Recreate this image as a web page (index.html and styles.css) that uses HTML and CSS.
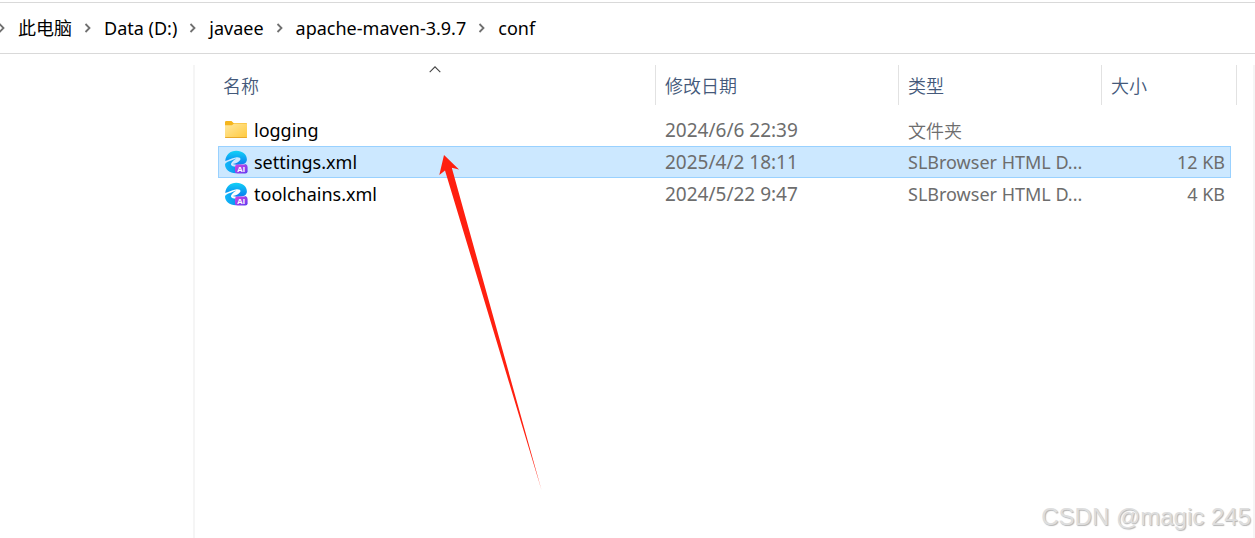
FILE: index.html
```
<!DOCTYPE html>
<html lang="zh-CN">
<head>
  <meta charset="UTF-8">
  <meta name="viewport" content="width=device-width, initial-scale=1.0">
  <title>conf</title>
  <link rel="stylesheet" href="styles.css">
</head>
<body>

  <!-- Shared icons -->
  <svg class="symbols" aria-hidden="true">
    <defs>
      <linearGradient id="blue" x1="0" y1="0" x2="0" y2="1">
        <stop offset="0" stop-color="#12d2f6"/>
        <stop offset="1" stop-color="#0a7cf0"/>
      </linearGradient>
      <linearGradient id="cyan" x1="0" y1="0" x2="1" y2="0">
        <stop offset="0" stop-color="#10b8f8"/>
        <stop offset="1" stop-color="#0878e8"/>
      </linearGradient>
      <linearGradient id="purple" x1="0" y1="0" x2="1" y2="1">
        <stop offset="0" stop-color="#d545e4"/>
        <stop offset="1" stop-color="#5a3df2"/>
      </linearGradient>
      <linearGradient id="yellow" x1="0" y1="0" x2="1" y2="1">
        <stop offset="0" stop-color="#ffe8a0"/>
        <stop offset="1" stop-color="#ffc93c"/>
      </linearGradient>
    </defs>
    <symbol id="chevron" viewBox="0 0 8 10">
      <path d="M1.5 1 L5.5 5 L1.5 9" fill="none" stroke="#707070" stroke-width="1.8"/>
    </symbol>
    <symbol id="browser" viewBox="0 0 24 24">
      <path d="M1.2 11 C1.8 4.8 6.3 .8 12.2 .8 C18.5 .8 23 4.6 22.9 9.6 C22.8 12.8 20.4 14.4 16.6 14.6 C13.6 14.8 10.6 14.6 8.6 14 C12 13.4 15.6 11.6 16.4 9.4 C16.9 7.6 14.6 6.9 11.6 7.4 C7.4 8 4.4 10.4 1.2 11 Z" fill="url(#blue)"/>
      <path d="M1 14.8 C1.2 12.4 6 11 12.4 8.6 C9 10.8 6.6 12.8 7 14.8 C8 17.4 15 17.6 22.4 14 C20.4 20 16.5 23.2 11.6 23.2 C5.6 23.2 1.2 19.4 1 14.8 Z" fill="url(#cyan)"/>
      <rect x="11" y="14.6" width="12.6" height="9" rx="2.4" fill="url(#purple)"/>
    </symbol>
  </svg>

  <!-- Address bar -->
  <nav class="breadcrumb" aria-label="路径">
    <svg class="chevron"><use href="#chevron"/></svg>
    <a href="#">此电脑</a>
    <svg class="chevron"><use href="#chevron"/></svg>
    <a href="#">Data (D:)</a>
    <svg class="chevron"><use href="#chevron"/></svg>
    <a href="#">javaee</a>
    <svg class="chevron"><use href="#chevron"/></svg>
    <a href="#">apache-maven-3.9.7</a>
    <svg class="chevron"><use href="#chevron"/></svg>
    <a href="#">conf</a>
  </nav>

  <div class="explorer">
    <aside class="sidebar"></aside>

    <!-- File list -->
    <main class="files">
      <table class="file-table">
        <colgroup>
          <col>
          <col class="col-date">
          <col class="col-type">
          <col class="col-size">
          <col class="col-end">
        </colgroup>
        <thead>
          <tr>
            <th aria-sort="ascending">
              <svg class="sort" viewBox="0 0 12 7"><path d="M.7 6.2 L6 .9 L11.3 6.2" fill="none" stroke="#444" stroke-width="1.1"/></svg>
              <button type="button">名称</button>
            </th>
            <th><button type="button">修改日期</button></th>
            <th><button type="button">类型</button></th>
            <th class="last"><button type="button">大小</button></th>
            <td class="end"></td>
          </tr>
        </thead>
        <tbody>
          <tr>
            <td class="name">
              <div class="file">
                <svg class="icon" viewBox="0 0 24 24">
                  <path d="M1 4.2 Q1 3 2.2 3 H7.5 L9.5 5 H22 Q23 5 23 6 V9 H1 Z" fill="#f5b51c"/>
                  <path d="M1 7.3 H8 L10 5.6 H22.2 Q23 5.6 23 6.4 V19.2 Q23 20 22.2 20 H1.8 Q1 20 1 19.2 Z" fill="url(#yellow)"/>
                  <path d="M1 19 H23 Q23 20 22.2 20 H1.8 Q1 20 1 19 Z" fill="#e8a92c"/>
                </svg>
                <span>logging</span>
              </div>
            </td>
            <td class="date">2024/6/6 22:39</td>
            <td class="cjk">文件夹</td>
            <td class="size"></td>
            <td class="end"></td>
          </tr>
          <tr class="selected">
            <td class="name">
              <div class="file">
                <svg class="icon" viewBox="0 0 24 24">
                  <use href="#browser"/>
                  <text class="badge" x="17" y="22" text-anchor="middle">AI</text>
                </svg>
                <span>settings.xml</span>
              </div>
            </td>
            <td class="date">2025/4/2 18:11</td>
            <td>SLBrowser HTML D...</td>
            <td class="size">12 KB</td>
            <td class="end"></td>
          </tr>
          <tr>
            <td class="name">
              <div class="file">
                <svg class="icon" viewBox="0 0 24 24">
                  <use href="#browser"/>
                  <text class="badge" x="17" y="22" text-anchor="middle">AI</text>
                </svg>
                <span>toolchains.xml</span>
              </div>
            </td>
            <td class="date">2024/5/22 9:47</td>
            <td>SLBrowser HTML D...</td>
            <td class="size">4 KB</td>
            <td class="end"></td>
          </tr>
        </tbody>
      </table>
    </main>
  </div>

  <!-- Arrow pointing at settings.xml -->
  <svg class="arrow" viewBox="0 0 140 350" aria-hidden="true">
    <path d="M24 10 L39 24.5 L31.8 22.8 L121.5 345 L25 25.5 L19.3 30 Z" fill="#ff2010"/>
  </svg>

  <div class="watermark">CSDN @magic 245</div>

</body>
</html>
```
FILE: styles.css
```
* {
  box-sizing: border-box;
}

body {
  font-family: "Noto Sans", "Noto Sans CJK SC", sans-serif;
  font-size: 18px;
  line-height: 24px;
  background-color: white;
  color: black;
  margin: 0;
  min-height: 100vh;
  display: flex;
  flex-direction: column;
  position: relative;
  overflow-x: hidden;
}

.symbols {
  position: absolute;
  width: 0;
  height: 0;
}

.cjk,
th button {
  font-family: "Noto Sans CJK SC", sans-serif;
  font-size: 18px;
  font-weight: 350;
}

/* Address bar */
.breadcrumb {
  display: flex;
  align-items: center;
  gap: 12px;
  height: 52px;
  margin-top: 2px;
  margin-left: -2px;
  padding-bottom: 1px;
  border-top: 1px solid #d9d9d9;
  border-bottom: 1px solid #d9d9d9;
  white-space: nowrap;
}

.breadcrumb a {
  color: black;
  text-decoration: none;
}

.chevron {
  width: 8px;
  height: 10px;
  flex: none;
}

/* Main area */
.explorer {
  flex: 1;
  display: flex;
  padding-top: 11px;
}

.sidebar {
  width: 195px;
  flex: none;
  border-right: 2px solid #f5f5f5;
}

.files {
  flex: 1;
  padding: 0 16px 0 23px;
  border-right: 2px solid #f5f5f5;
}

.file-table {
  width: 100%;
  table-layout: fixed;
  border-collapse: separate;
  border-spacing: 0;
}

.col-date {
  width: 243px;
}

.col-type {
  width: 203px;
}

.col-size {
  width: 129px;
}

.col-end {
  width: 6px;
}

th {
  position: relative;
  height: 40px;
  padding: 0 0 0 5px;
  border-right: 1px solid #e2e2e2;
  text-align: left;
}

th + th {
  padding-left: 9px;
}

th.last {
  border-right: none;
}

th button {
  padding: 0;
  border: none;
  background: none;
  color: #44597a;
  line-height: 24px;
}

thead .end {
  border-right: 1px solid #e2e2e2;
}

/* Arrow above the sorted column */
.sort {
  position: absolute;
  top: 1px;
  left: 50%;
  width: 12px;
  height: 7px;
  margin-left: -8px;
}

tbody::before {
  content: "";
  display: block;
  height: 9px;
}

tbody td {
  height: 32px;
  padding: 0 6px 0 9px;
  border: 0 solid transparent;
  border-width: 1px 0;
  color: #6d6d6d;
  line-height: 24px;
  white-space: nowrap;
}

tbody .name {
  padding-left: 5px;
  border-left-width: 1px;
  color: black;
}

tbody .date {
  font-size: 19px;
}

tbody .size {
  padding-right: 5px;
  border-right-width: 1px;
  text-align: right;
}

tbody .end {
  padding: 0;
}

.selected td:not(.end) {
  background-color: #cce8ff;
  border-color: #99d1ff;
}

.file {
  display: flex;
  align-items: center;
  gap: 6px;
}

.icon {
  width: 24px;
  height: 24px;
  flex: none;
}

.badge {
  fill: white;
  font-family: "Liberation Sans", Arial, sans-serif;
  font-size: 8px;
  font-weight: bold;
}

.arrow {
  position: absolute;
  top: 145px;
  left: 420px;
  width: 140px;
  height: 350px;
  pointer-events: none;
}

.watermark {
  position: absolute;
  right: 4px;
  bottom: 7px;
  color: #dedede;
  font-family: "Liberation Sans", Arial, sans-serif;
  font-size: 24px;
  line-height: 28px;
  text-shadow: 1px 1px 1px #b5b5b5;
}
```
